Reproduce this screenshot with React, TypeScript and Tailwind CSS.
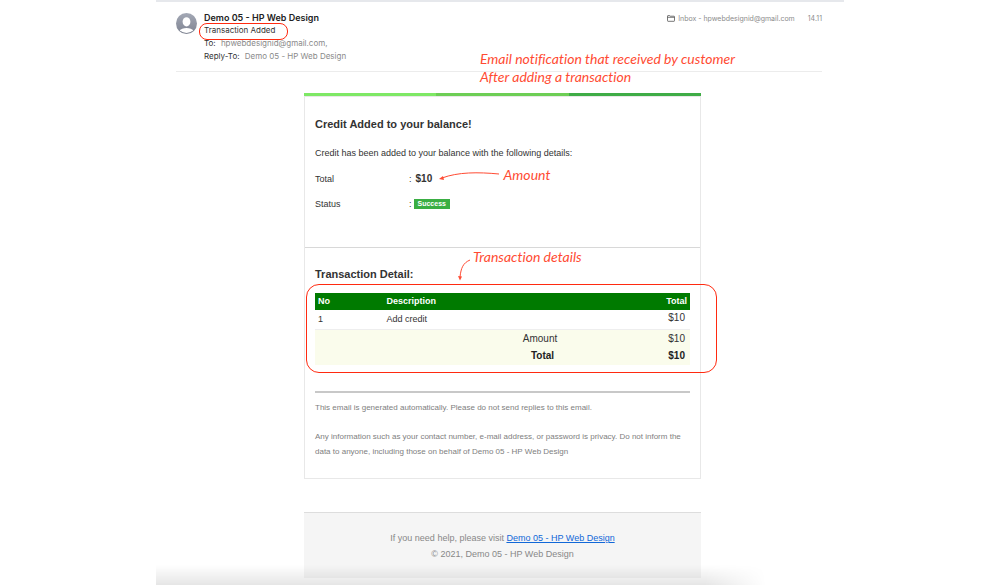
const items = [{ no: 1, description: 'Add credit', total: '$10' }]

function Note({ className, children }: { className: string; children: React.ReactNode }) {
  return (
    <p
      className={`absolute whitespace-nowrap font-['Lato',sans-serif] italic text-[14px] leading-[18px] text-[#ff4b33] [font-variant-ligatures:none] ${className}`}
    >
      {children}
    </p>
  )
}

function Avatar() {
  return (
    <svg viewBox="0 0 21 21" className="size-[21px] shrink-0" role="img" aria-label="Sender">
      <defs>
        <linearGradient id="avatar" x1="0" y1="0" x2="0" y2="1">
          <stop offset="0" stopColor="#a3a8b5" />
          <stop offset="1" stopColor="#7f8492" />
        </linearGradient>
        <clipPath id="avatarClip">
          <circle cx="10.5" cy="10.5" r="9.4" />
        </clipPath>
      </defs>
      <circle cx="10.5" cy="10.5" r="10.5" fill="url(#avatar)" />
      <g fill="#fff" clipPath="url(#avatarClip)">
        <ellipse cx="10.5" cy="8.8" rx="3.9" ry="4.6" />
        <path d="M3 18.4C4.600 16 7.400 15 10.500 15s5.900 1 7.500 3.400L15 21H6z" />
      </g>
    </svg>
  )
}

function MailHeader() {
  return (
    <header className="flex items-start gap-[7px] border-b border-[#ececec] pt-[10px] pb-[8px]">
      <div className="pt-px">
        <Avatar />
      </div>
      <div className="flex-1 text-[8px] leading-[13px] text-[#333]">
        <h1 className="text-[9px] leading-3 font-semibold text-[#222]">Demo 05 - HP Web Design</h1>
        <p className="relative w-fit">
          Transaction Added
          <span className="absolute -top-px -left-[5px] -right-[13px] h-[17px] rounded-[8px] border border-[#ff2a10]" />
        </p>
        <p>
          To: <span className="ml-[3px] text-[#8a8a8a]">hpwebdesignid@gmail.com,</span>
        </p>
        <p>
          Reply-To: <span className="ml-[3px] text-[#8a8a8a]">Demo 05 - HP Web Design</span>
        </p>
      </div>
      <div className="flex items-center gap-[2px] pt-px text-[7px] leading-[11px] text-[#8c8c8c]">
        <svg viewBox="0 0 8 7" className="h-[7px] w-2" fill="none" stroke="#555" strokeWidth="0.8">
          <path d="M.5 2.300h7M.5 5.700V1.100Q.5.600 1 .6h1.700l.5.600H7q.5 0 .5.500v4q0 .6-.5.600H1q-.5 0-.5-.6z" />
        </svg>
        <span className="ml-px">Inbox - hpwebdesignid@gmail.com</span>
        <time className="ml-[11px]">14.11</time>
      </div>
    </header>
  )
}

function BalanceSummary() {
  return (
    <section className="border-b border-[#d8d8d8] px-[10px] pt-[19px] pb-[35px]">
      <h2 className="text-[11px] leading-4 font-bold text-[#333]">Credit Added to your balance!</h2>
      <p className="mt-[15px] leading-3">Credit has been added to your balance with the following details:</p>
      <dl className="mt-3 grid grid-cols-[94px_1fr] gap-y-[9px] leading-4">
        <dt>Total</dt>
        <dd className="flex items-center gap-1">
          :
          <span className="relative text-[10px] font-bold">
            $10
            <svg viewBox="0 0 62 14" className="absolute top-0 left-[22px] h-[14px] w-[62px]" fill="none">
              <path d="M4 7C20 1 40 1 61 3" stroke="#ff4b33" />
              <path d="M1 8l4-3 1 4z" fill="#ff4b33" />
            </svg>
            <Note className="-top-[5px] left-[88px] font-normal">Amount</Note>
          </span>
        </dd>
        <dt>Status</dt>
        <dd className="flex items-center gap-[2px]">
          :<span className="bg-[#3aae43] px-[4px] text-[7px] leading-[10px] font-bold text-white">Success</span>
        </dd>
      </dl>
    </section>
  )
}

function TransactionDetail() {
  return (
    <section className="px-[10px] pt-[18px] pb-[19px]">
      <div className="relative">
        <h2 className="text-[11px] leading-4 font-bold text-[#333]">Transaction Detail:</h2>
        <svg viewBox="0 0 14 22" className="absolute -top-[7px] left-[142px] h-[22px] w-[14px]" fill="none">
          <path d="M13 1C6 4 4 9 3 18" stroke="#ff4b33" />
          <path d="M1 17l4 .500-2 4z" fill="#ff4b33" />
        </svg>
        <Note className="-top-[18px] left-[158px]">Transaction details</Note>
      </div>

      <div className="relative mt-[11px]">
        <table className="w-full table-fixed border-collapse">
          <colgroup>
            <col className="w-[18%]" />
            <col className="w-[35%]" />
            <col className="w-[14%]" />
            <col />
          </colgroup>
          <thead className="bg-[#007a00] text-white">
            <tr className="leading-[17px]">
              <th className="pl-[3px] text-left">No</th>
              <th colSpan={2} className="pl-[4px] text-left">Description</th>
              <th className="pr-[3px] text-right">Total</th>
            </tr>
          </thead>
          <tbody>
            {items.map(item => (
              <tr key={item.no} className="border-b border-[#eee] leading-[19px]">
                <td className="pl-[3px]">{item.no}</td>
                <td colSpan={2} className="pl-[4px]">{item.description}</td>
                <td className="pr-[5px] pb-1 text-right align-top text-[10px] leading-[15px]">{item.total}</td>
              </tr>
            ))}
          </tbody>
          <tfoot className="bg-[#fafcec] text-[10px] leading-[17px]">
            <tr>
              <td colSpan={2} />
              <td className="text-center">Amount</td>
              <td className="pr-[5px] text-right">$10</td>
            </tr>
            <tr className="font-bold text-[#222]">
              <td colSpan={2} />
              <td className="pl-[5px] text-center leading-[18px]">Total</td>
              <td className="pr-[5px] text-right leading-[18px]">$10</td>
            </tr>
          </tfoot>
        </table>
        <span className="absolute -top-[9px] -right-[27px] -bottom-[8px] -left-[9px] rounded-[13px] border border-[#ff2a10]" />
      </div>

      <hr className="mt-[26px] border-t-2 border-[#c8c8c8]" />
      <div className="pt-[7px] text-[8px] leading-[15px] text-[#808080]">
        <p>This email is generated automatically. Please do not send replies to this email.</p>
        <p className="mt-[14px]">
          Any information such as your contact number, e-mail address, or password is privacy. Do not inform the
          data to anyone, including those on behalf of Demo 05 - HP Web Design
        </p>
      </div>
    </section>
  )
}

export default function App() {
  return (
    <div className="min-h-screen bg-white font-['Inter',sans-serif]">
      <div className="relative mx-auto min-h-screen max-w-[688px] border-t-2 border-[#e6e8ec]">
        <div className="relative pr-[22px] pl-5">
          <MailHeader />
          <Note className="top-[48px] left-[324px]">
            Email notification that received by customer
            <br />
            After adding a transaction
          </Note>
        </div>

        <main className="mt-[21px] pl-[5px] font-['Liberation_Sans',Arial,sans-serif] text-[9px] text-[#333]">
          <div className="mx-auto max-w-[397px]">
            <div className="flex h-[3px]">
              <div className="flex-1 bg-[#7ee865]" />
              <div className="flex-1 bg-[#6dce55]" />
              <div className="flex-1 bg-[#3fac46]" />
            </div>
            <div className="border border-[#e8e8e8]">
              <BalanceSummary />
              <TransactionDetail />
            </div>
            <footer className="mt-[33px] border-t border-[#ddd] bg-[#f5f5f5] pt-[17px] pb-4 text-center leading-4 text-[#888]">
              <p>
                If you need help, please visit{' '}
                <a href="#" className="text-[#1168d8] underline">Demo 05 - HP Web Design</a>
              </p>
              <p>© 2021, Demo 05 - HP Web Design</p>
            </footer>
          </div>
        </main>

        {/* window shadow */}
        <div className="pointer-events-none absolute bottom-0 left-0 h-5 w-[610px] bg-linear-to-t from-black/10 to-transparent mask-r-from-90%" />
      </div>
    </div>
  )
}
